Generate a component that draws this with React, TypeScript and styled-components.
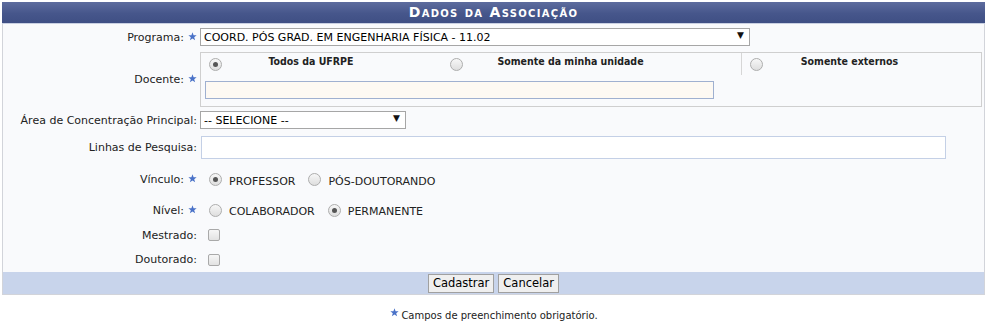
import React from 'react';
import styled, {createGlobalStyle} from "styled-components";

const GlobalStyle = createGlobalStyle`
    body {
        margin: 0;
        background: #fff;
        font-family: "DejaVu Sans", Verdana, sans-serif;
        font-size: 11px;
        color: #222;
    }
`

const Star = () => (
    <StarIcon viewBox="0 0 10 10">
        <path d="M5 0.4 L6.2 3.6 L9.6 3.7 L6.9 5.8 L7.9 9.2 L5 7.2 L2.1 9.2 L3.1 5.8 L0.4 3.7 L3.8 3.6 Z" fill="#4a72c8"/>
    </StarIcon>
)

type RowProps = {
    label: string;
    required?: boolean;
    h: number;
    children: React.ReactNode;
}
const FormRow = (props: RowProps) => (
    <Row $h={props.h}>
        <Label>
            {props.label}
            {props.required && <Star/>}
        </Label>
        <Field>{props.children}</Field>
    </Row>
)

export default function App() {
    return (
        <>
            <GlobalStyle/>
            <Form>
                <Caption>Dados da Associação</Caption>
                <Body>
                    <FormRow label="Programa:" required h={26}>
                        <SelectBox $w={550}>
                            <Select defaultValue="1102">
                                <option value="1102">COORD. PÓS GRAD. EM ENGENHARIA FÍSICA - 11.02</option>
                            </Select>
                            <Arrow>▼</Arrow>
                        </SelectBox>
                    </FormRow>
                    <FormRow label="Docente:" required h={58}>
                        <DocenteBox>
                            <Options>
                                <RadioCell><Radio $on/></RadioCell>
                                <OptionLabel>Todos da UFRPE</OptionLabel>
                                <RadioCell $end><Radio/></RadioCell>
                                <OptionLabel $pr={63}>Somente da minha unidade</OptionLabel>
                                <RadioCell $sep><Radio/></RadioCell>
                                <OptionLabel>Somente externos</OptionLabel>
                            </Options>
                            <DocenteInput/>
                        </DocenteBox>
                    </FormRow>
                    <FormRow label="Área de Concentração Principal:" h={24}>
                        <SelectBox $w={206}>
                            <Select defaultValue="">
                                <option value="">-- SELECIONE --</option>
                            </Select>
                            <Arrow>▼</Arrow>
                        </SelectBox>
                    </FormRow>
                    <FormRow label="Linhas de Pesquisa:" h={30}>
                        <TextInput/>
                    </FormRow>
                    <FormRow label="Vínculo:" required h={35}>
                        <Choices>
                            <Radio $on/><ChoiceText>PROFESSOR</ChoiceText>
                            <Radio/><ChoiceText>PÓS-DOUTORANDO</ChoiceText>
                        </Choices>
                    </FormRow>
                    <FormRow label="Nível:" required h={26}>
                        <Choices>
                            <Radio/><ChoiceText>COLABORADOR</ChoiceText>
                            <Radio $on/><ChoiceText>PERMANENTE</ChoiceText>
                        </Choices>
                    </FormRow>
                    <FormRow label="Mestrado:" h={24}>
                        <Check/>
                    </FormRow>
                    <FormRow label="Doutorado:" h={25}>
                        <Check/>
                    </FormRow>
                </Body>
                <Footer>
                    <Button>Cadastrar</Button>
                    <Button>Cancelar</Button>
                </Footer>
            </Form>
            <Note>
                <Star/>
                <span>Campos de preenchimento obrigatório.</span>
            </Note>
        </>
    );
}

const Form = styled.div`
    margin: 2px 0 0 2px;
    width: 983px;
    box-sizing: border-box;
    border: 1px solid #d2d4da;
    border-top: none;
`
const Caption = styled.div`
    height: 21px;
    margin: 0 -1px;
    background: linear-gradient(#5d6c9e, #46568b 55%, #3f4f84);
    border-bottom: 1px solid #c9d0e2;
    color: #fff;
    font-weight: bold;
    font-size: 14px;
    font-variant: small-caps;
    letter-spacing: 1.3px;
    text-align: center;
    line-height: 20px;
`
const Body = styled.div`
    background: #f9fafc;
    display: flex;
    flex-direction: column;
`
const Row = styled.div<{ $h: number }>`
    display: grid;
    grid-template-columns: 197px 1fr;
    height: ${p => p.$h}px;
    align-items: center;
`
const Label = styled.div`
    display: flex;
    justify-content: flex-end;
    align-items: center;
    padding-right: 3px;
    white-space: nowrap;
`
const StarIcon = styled.svg`
    width: 9px;
    height: 9px;
    margin-left: 4px;
    margin-bottom: 2px;
`
const Field = styled.div`
    display: flex;
    align-items: center;
`
const SelectBox = styled.div<{ $w: number }>`
    position: relative;
    width: ${p => p.$w}px;
    height: 18px;
`
const Select = styled.select`
    appearance: none;
    width: 100%;
    height: 18px;
    box-sizing: border-box;
    margin: 0;
    padding: 0 0 0 3px;
    border: 1px solid #a6a6a6;
    border-radius: 0;
    background: #fff;
    color: #000;
    font-family: "DejaVu Sans", Verdana, sans-serif;
    font-size: 11px;
`
const Arrow = styled.span`
    position: absolute;
    right: 6px;
    top: 2px;
    font-size: 9px;
    color: #111;
    pointer-events: none;
`
const DocenteBox = styled.div`
    width: 782px;
    height: 55px;
    margin-top: 1px;
    box-sizing: border-box;
    border: 1px solid #cfcfcf;
    display: flex;
    flex-direction: column;
`
const Options = styled.div`
    display: grid;
    grid-template-columns: 22px 176px 64px 278px 22px 173px 1fr;
    height: 22px;
    align-items: stretch;
`
const RadioCell = styled.div<{ $end?: boolean; $sep?: boolean }>`
    display: flex;
    align-items: center;
    justify-content: ${p => p.$end ? 'flex-end' : 'flex-start'};
    padding-left: ${p => p.$end ? 0 : 8}px;
    padding-top: 1px;
    border-left: ${p => p.$sep ? '1px solid #d6d6d6' : 'none'};
`
const OptionLabel = styled.div<{ $pr?: number }>`
    font-family: "DejaVu Sans Condensed", "DejaVu Sans", sans-serif;
    font-weight: bold;
    font-size: 10.5px;
    text-align: center;
    white-space: nowrap;
    padding-right: ${p => p.$pr || 0}px;
    padding-top: 2px;
`
const DocenteInput = styled.input`
    width: 509px;
    height: 18px;
    box-sizing: border-box;
    margin: 6px 0 0 4px;
    border: 1px solid #9fb0d0;
    background: #fdf9f3;
    padding: 0 2px;
`
const TextInput = styled.input`
    width: 745px;
    height: 23px;
    box-sizing: border-box;
    margin: 0 0 0 1px;
    border: 1px solid #c4d0e6;
    background: #fff;
`
const Radio = styled.span<{ $on?: boolean }>`
    width: 13px;
    height: 13px;
    box-sizing: border-box;
    border-radius: 50%;
    border: 1px solid #adadad;
    background: linear-gradient(#f7f7f7, #dedede);
    display: inline-flex;
    align-items: center;
    justify-content: center;
    flex-shrink: 0;

    &::after {
        content: '';
        width: 5px;
        height: 5px;
        border-radius: 50%;
        background: ${p => p.$on ? '#555' : 'transparent'};
    }
`
const Choices = styled.div`
    display: flex;
    align-items: center;
    padding-left: 9px;

    ${Radio} {
        margin-right: 7px;
    }
`
const ChoiceText = styled.span`
    margin-right: 13px;
    padding-top: 3px;
`
const Check = styled.span`
    width: 12px;
    height: 12px;
    margin-left: 8px;
    box-sizing: border-box;
    border: 1px solid #a9a9a9;
    border-radius: 2px;
    background: linear-gradient(#f6f6f6, #e2e2e2);
`
const Footer = styled.div`
    height: 22px;
    background: #c8d4eb;
    display: flex;
    justify-content: center;
    align-items: center;
    gap: 4px;
`
const Button = styled.button`
    height: 19px;
    padding: 0 4px;
    border: 1px solid #a0a0a0;
    border-radius: 0;
    background: #efefef;
    color: #000;
    font-family: "DejaVu Sans", Verdana, sans-serif;
    font-size: 11.5px;
`
const Note = styled.div`
    display: flex;
    justify-content: center;
    align-items: center;
    margin-top: 13px;
    font-size: 10px;
    color: #222;
    gap: 1px;
    padding-right: 2px;

    svg {
        margin: 0 1px 6px 0;
    }
`
